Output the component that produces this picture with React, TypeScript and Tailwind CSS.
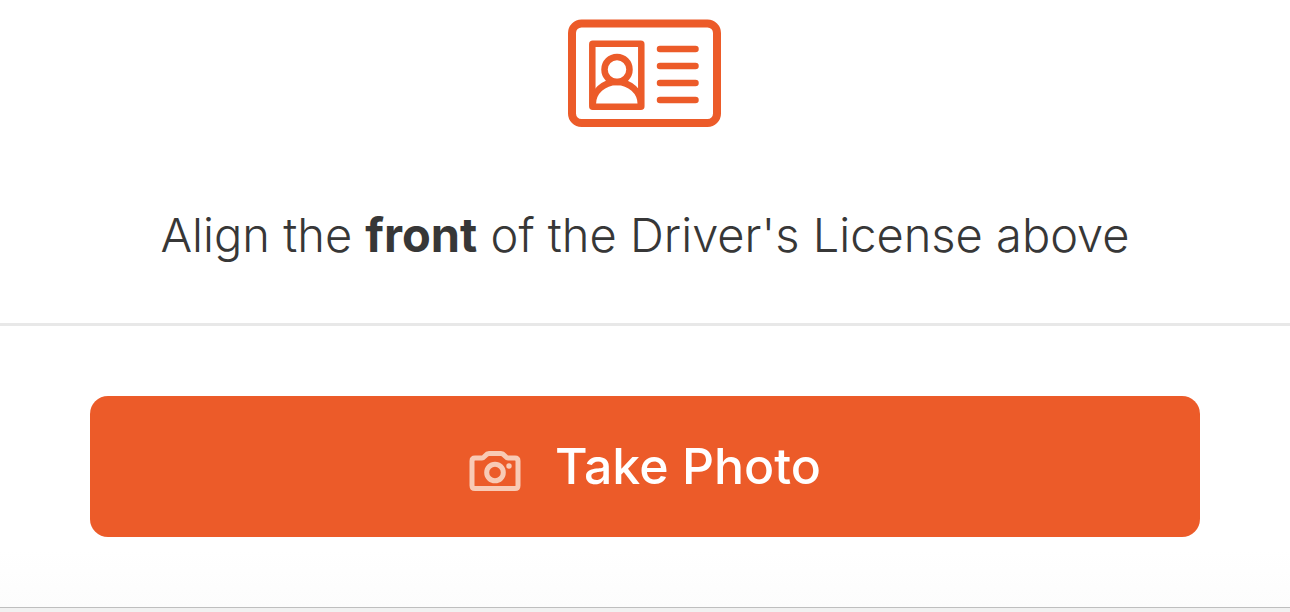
/**
 * Document Capture Screen
 * Asks for the front of the driver's license and offers the camera button.
 */

function LicenseIcon() {
  return (
    <svg
      className="h-[108px] w-[154px]"
      viewBox="0 0 154 108"
      fill="none"
      stroke="#EC5B29"
      aria-hidden="true"
    >
      {/* Card */}
      <rect x="4" y="4.5" width="145" height="99.5" rx="9.5" strokeWidth="8" />

      {/* Portrait */}
      <rect x="24.3" y="24.7" width="49" height="63" rx="0.5" strokeWidth="6.5" />
      <circle cx="49" cy="50.5" r="12.5" strokeWidth="6.5" />
      <path d="M24.8 85A24 22 0 0 1 72.8 85" strokeWidth="6.5" />

      {/* Detail lines */}
      <path d="M92 30H127.500M92 47H127.500M92 64H127.500M92 81H127.500" strokeWidth="6.5" strokeLinecap="round" />
    </svg>
  );
}

function CameraIcon() {
  return (
    <svg
      className="h-10 w-[52px]"
      viewBox="0 0 52 40"
      fill="none"
      stroke="#F8CAB5"
      strokeWidth="5"
      aria-hidden="true"
    >
      <path
        d="M6 7H13C15.500 7 16.500 2.500 20 2.500H32C35.500 2.500 36.500 7 39 7H46Q49 7 49 10V34.500Q49 37.500 46 37.500H6Q3 37.500 3 34.500V10Q3 7 6 7Z"
        strokeLinejoin="round"
      />
      <circle cx="26" cy="21.5" r="8.3" />
      <circle cx="40" cy="15" r="2.7" fill="#F8CAB5" stroke="none" />
    </svg>
  );
}

export default function App() {
  return (
    <div className="flex min-h-screen flex-col bg-white font-['Inter','Liberation_Sans',sans-serif]">
      <main className="flex flex-1 flex-col">
        {/* Instructions */}
        <section className="flex flex-col items-center border-b-3 border-[#E8E8E8] px-6 pt-[19px] pb-[54px]">
          <LicenseIcon />
          <p className="mt-[74px] text-center text-[47px] leading-[68px] font-light text-[#373737]">
            Align the <strong className="font-bold">front</strong> of the Driver's License above
          </p>
        </section>

        {/* Action */}
        <section className="flex flex-1 flex-col bg-linear-to-b from-white from-80% to-[#FCFCFC] px-[90px] py-[70px]">
          <button
            type="button"
            className="flex w-full items-end justify-center gap-[34px] rounded-[18px] bg-[#EC5B29] py-[46px] text-[50px] leading-[49px] font-medium text-white"
          >
            <CameraIcon />
            Take Photo
          </button>
        </section>
      </main>

      {/* Bottom bar edge */}
      <footer className="h-[5px] border-t border-[#BEBEBE] bg-[#F1F1F1]" />
    </div>
  );
}
